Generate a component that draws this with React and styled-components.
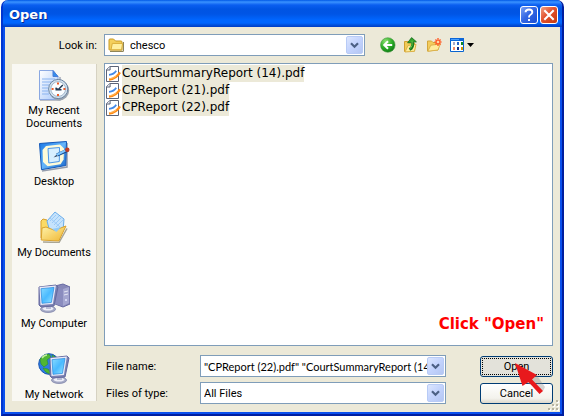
import React from "react";
import styled, { createGlobalStyle, css } from "styled-components";

const Global = createGlobalStyle`
  *, *::before, *::after { box-sizing: border-box; }
  body { margin: 0; background: #fff; }
  button, input, select { font: inherit; color: inherit; margin: 0; }
`;

const edge = "#7f9db9";

const Dialog = styled.main`
  position: relative;
  display: flex;
  flex-direction: column;
  height: 100vh;
  min-height: 400px;
  margin-left: 1px;
  padding: 0 2px 2px;
  background: #ece9d8;
  border: 2px solid #001ea0;
  border-top: 0;
  border-left-color: #0036d0;
  border-radius: 7px 7px 0 0;
  box-shadow: inset 2px -2px 0 #0a50ee, inset -2px 0 0 #0a50ee;
  font: 11px/13px Roboto, "Liberation Sans", Arial, sans-serif;
  color: #000;
  overflow: hidden;
`;

const TitleBar = styled.header`
  display: flex;
  align-items: center;
  gap: 2px;
  flex: none;
  height: 27px;
  margin: 0 -2px;
  padding: 3px 4px 0 6px;
  background: linear-gradient(#0058e6 0, #3a93ff 2px, #2a80fa 3px, #0a5ef0 5px, #0054e3 9px, #0055e5 14px, #0066ff 20px, #0066ff 23px, #0050dc 25px, #003cc4 27px);
`;

const Title = styled.h1`
  flex: 1;
  margin: 0;
  font: bold 13px/20px "DejaVu Sans", Verdana, sans-serif;
  color: #fff;
  text-shadow: 1px 1px 0 #0a2a90;
`;

const CaptionButton = styled.button`
  display: grid;
  place-items: center;
  width: 18px;
  height: 18px;
  padding: 0;
  border: 1px solid #fff;
  border-radius: 3px;
  background: ${(p) =>
    p.$danger
      ? "linear-gradient(135deg, #f0a083, #e2512c 45%, #c43a10)"
      : "linear-gradient(135deg, #7ba2f4, #3568e4 45%, #1a4ed4)"};
`;

const Body = styled.div`
  flex: 1;
  min-height: 0;
  display: grid;
  grid-template-columns: 85px minmax(0, 1fr);
  grid-template-rows: 22px minmax(0, 1fr);
  gap: 7px;
  padding: 7px 7px 8px;
`;

const Label = styled.label`
  align-self: center;
  text-align: ${(p) => (p.$end ? "right" : "left")};
  padding-left: 2px;
`;

const LookRow = styled.div`
  display: flex;
  gap: 15px;
`;

const Combo = styled.div`
  flex: 1;
  min-width: 0;
  display: flex;
  align-items: center;
  height: 22px;
  padding: 1px 1px 1px 3px;
  border: 1px solid ${edge};
  background: #fff;
`;

const fieldText = css`
  flex: 1;
  min-width: 0;
  height: 18px;
  padding: 0;
  border: 0;
  outline: 0;
  background: transparent;
`;

const Select = styled.select`
  ${fieldText}
  appearance: none;
  padding-left: ${(p) => (p.$afterIcon ? "6px" : "0")};
`;

const TextField = styled.input`
  ${fieldText}
  font-family: Lato, "Liberation Sans", sans-serif;
`;

const DropButton = styled.button`
  display: grid;
  place-items: center;
  flex: none;
  width: 17px;
  height: 18px;
  padding: 0;
  border: 1px solid #b8cbf6;
  border-radius: 2px;
  background: linear-gradient(135deg, #dce6fe, #c3d3fd 50%, #b4c6f2);
`;

const Toolbar = styled.div`
  display: flex;
  align-items: center;
  gap: 7px;
  flex: none;
  width: 173px;
`;

const ToolButton = styled.button`
  display: flex;
  align-items: center;
  gap: 2px;
  padding: 0;
  border: 0;
  background: none;
`;

const Places = styled.nav`
  display: grid;
  grid-auto-rows: 71px;
  align-content: start;
  min-height: 0;
  margin: 1px 0 3px;
  overflow: hidden;
  background: #f9f8f3;
  border-right: 1px solid #d6d2c2;
`;

const Place = styled.button`
  display: flex;
  flex-direction: column;
  align-items: center;
  justify-content: flex-start;
  gap: 3px;
  padding: 5px 0 0;
  border: 0;
  background: none;
  line-height: 13px;
  white-space: pre-line;
`;

const Main = styled.div`
  display: flex;
  flex-direction: column;
  gap: 9px;
  min-height: 0;
`;

const FilePane = styled.section`
  position: relative;
  flex: 1;
  min-height: 0;
  border: 1px solid ${edge};
  background: #fff;
`;

const FileList = styled.ul`
  list-style: none;
  margin: 0;
  padding: 1px;
`;

const FileRow = styled.button`
  display: flex;
  align-items: center;
  gap: 1px;
  height: 17px;
  padding: 0;
  border: 0;
  background: none;
  font: 12px/17px "DejaVu Sans", Verdana, sans-serif;
`;

const FileName = styled.span`
  background: #ece9d8;
`;

const Hint = styled.strong`
  position: absolute;
  right: 8px;
  bottom: 11px;
  font: bold 15px/20px "DejaVu Sans", Verdana, sans-serif;
  color: #f00;
`;

const Form = styled.form`
  display: grid;
  grid-template-columns: 96px minmax(0, 1fr) 73px;
  grid-template-rows: 22px 22px;
  row-gap: 5px;
  flex: none;
`;

const FormCombo = styled(Combo)`
  margin-right: 34px;
`;

const PushButton = styled.button`
  position: relative;
  height: 21px;
  align-self: center;
  padding: 0;
  border: 1px solid #003c74;
  border-radius: 3px;
  background: ${(p) => (p.$pressed ? "#e3e2da" : "linear-gradient(#fff, #f3f2ec 75%, #dcd8cc)")};
  outline: ${(p) => (p.$pressed ? "1px dotted #000" : "0")};
  outline-offset: -3px;
`;

const Pointer = styled.svg`
  position: absolute;
  left: 33px;
  top: 4px;
  z-index: 1;
  pointer-events: none;
`;

const Grip = styled.svg`
  position: absolute;
  right: 2px;
  bottom: 2px;
`;

const Chevron = () => (
  <svg width="9" height="7" viewBox="0 0 9 7" aria-hidden="true">
    <path d="M1 1.2 4.5 4.7 8 1.2" fill="none" stroke="#4d6185" strokeWidth="2.2" />
  </svg>
);

const FolderIcon = () => (
  <svg width="16" height="14" viewBox="0 0 16 14" aria-hidden="true">
    <path d="M2 13.4h12.5q1 0 1-1V4" fill="none" stroke="#8f8558" strokeWidth="1.1" />
    <path d="M1 11.5V2q0-1 1-1h3.5l2 2H13q1 0 1 1v8H2q-1 0-1-.5z" fill="#f4d05c" stroke="#c89a24" />
    <path d="M3 11.8 4.3 5.4h10.3l-1 6.4z" fill="#fff0a0" stroke="#d9ae3a" />
  </svg>
);

const PdfIcon = () => (
  <svg width="15" height="16" viewBox="0 0 15 16" aria-hidden="true">
    <path d="M.5 3.5 4 .5h8.5v15H.5z" fill="#fff" stroke="#5c6478" />
    <path d="M.5 4h3.6V.5" fill="#e9eff8" stroke="#5c6478" />
    <path d="M3 8.8q5-.3 7.2-4" fill="none" stroke="#4289e8" strokeWidth="1.8" />
    <path d="M3 13.5q7-.6 11-7.2" fill="none" stroke="#ff8a12" strokeWidth="2.3" />
    <path d="M3 12.8q5-.4 7.5-3" fill="none" stroke="#ffc878" strokeWidth=".8" />
  </svg>
);

const BackIcon = () => (
  <svg width="16" height="16" viewBox="0 0 16 16">
    <defs>
      <radialGradient id="green" cx=".35" cy=".25" r=".8">
        <stop offset="0" stopColor="#8be070" />
        <stop offset=".55" stopColor="#2fae2a" />
        <stop offset="1" stopColor="#0b7a12" />
      </radialGradient>
    </defs>
    <circle cx="7.8" cy="8" r="7.3" fill="url(#green)" stroke="#4e9a48" strokeWidth=".6" />
    <path d="M12.2 8H4.5M8 4.2 4.2 8 8 11.8" fill="none" stroke="#fff" strokeWidth="2" />
  </svg>
);

const UpIcon = () => (
  <svg width="16" height="16" viewBox="0 0 16 16">
    <path d="M1.5 14.5V4.5h4l1 1.5h5v8z" fill="#f2cb58" stroke="#d0a030" />
    <path d="m2 15 3-6.5 8-1.2-1.5 7z" fill="#ffec9c" stroke="#dcb248" />
    <path d="M6.5 12.5q4-2 3-7" fill="none" stroke="#177a1c" strokeWidth="3" />
    <path d="M4.6 5.8 8.6.6l4.8 4.2-2.1.3-4 .6z" fill="#32a22c" stroke="#146c1a" strokeWidth=".8" />
    <path d="M7.3 11.6q2.5-2 1.8-8" fill="none" stroke="#66c84c" />
  </svg>
);

const NewFolderIcon = () => (
  <svg width="16" height="16" viewBox="0 0 16 16">
    <path d="M1.5 14V4h4L7 5.5h5V13z" fill="#f3cc5c" stroke="#d3a63a" />
    <path d="M1.8 14.3 4.8 8.2l9.5-1.2L12 13z" fill="#ffec9c" stroke="#dbb24c" />
    <path d="M12 1v8M8.5 5h7M9.4 2.4l5.2 5.2M14.6 2.4 9.4 7.6" stroke="#ff5c28" strokeWidth="1.4" />
    <circle cx="12" cy="5" r="1.3" fill="#ffd8a0" />
  </svg>
);

const ViewsIcon = () => (
  <svg width="16" height="16" viewBox="0 0 16 16">
    <path d="M1.5 2.5h13v12h-13z" fill="#fff" stroke="#0864d0" />
    <path d="M1 1h14v3H1z" fill="#0c66d8" />
    <path d="M2 2h8v1H2z" fill="#4ba0ff" />
    <path d="M4 5h2v3H4z" fill="#a8a8c8" />
    <path d="M8 5h2v3H8z" fill="#2864c8" />
    <path d="M12 5h2v3h-2z" fill="#118a20" />
    <path d="M4 10h2v3H4z" fill="#f08868" />
    <path d="M8 10h2v3H8z" fill="#102c88" />
    <path d="M12 10h2v3h-2z" fill="#d89800" />
  </svg>
);

const Caret = () => (
  <svg width="7" height="4" viewBox="0 0 7 4">
    <path d="M0 0h7L3.5 4z" />
  </svg>
);

const RecentIcon = () => (
  <svg width="32" height="32" viewBox="0 0 32 32" aria-hidden="true">
    <defs>
      <linearGradient id="sheet" x2="1" y2="1">
        <stop stopColor="#fff" />
        <stop offset="1" stopColor="#a8c8fa" />
      </linearGradient>
    </defs>
    <path d="M2 31h20V8" fill="none" stroke="#a5aab8" strokeWidth="1.5" />
    <path d="M1.5 1.5H15l5 6v23H1.5z" fill="url(#sheet)" stroke="#8aa8e2" />
    <path d="M15 1.5v6h5z" fill="#328eed" stroke="#4b7dd8" />
    <path d="M4 10h13M4 13h10M4 16h7M4 19h6M4 22h6M4 25h7" stroke="#8ab4f0" strokeWidth="1.2" />
    <circle cx="21.2" cy="21.5" r="10" fill="#9ca5b0" />
    <circle cx="20.2" cy="20" r="9.6" fill="#d4e2ee" stroke="#6c86a2" />
    <circle cx="20.2" cy="20" r="7.4" fill="#fafdff" stroke="#90a8c0" strokeWidth=".8" />
    <path d="M20 13.6v2M20 25v2M13.6 20h2M25.4 20h2" stroke="#ee5c28" strokeWidth="2" />
    <path d="m24.8 16-4.5 4.6-2.8-1.6M17.5 20.8h6" fill="none" stroke="#253c55" strokeWidth="1.5" />
  </svg>
);

const DesktopIcon = () => (
  <svg width="32" height="32" viewBox="0 0 32 32" aria-hidden="true">
    <defs>
      <linearGradient id="desk" x2="1" y2="1">
        <stop stopColor="#1675e5" />
        <stop offset=".5" stopColor="#67b6fa" />
        <stop offset="1" stopColor="#1262c8" />
      </linearGradient>
    </defs>
    <path d="m4 31 25-4V3" fill="none" stroke="#939cac" strokeWidth="1.5" />
    <path d="m1.5 3.5 27-2-.7 24L3.5 29.7z" fill="url(#desk)" stroke="#1459b8" />
    <path d="m8 6 14-1.5 4 4-.4 11-3 4.8-13 2L5 22 4.5 10z" fill="#fffbd8" />
    <path d="m10 8.5 11.5-1-.2 14L10.8 23z" fill="#d7efff" stroke="#4d96e6" />
    <path d="m19 15 11-5" stroke="#174888" strokeWidth="3.5" />
    <path d="m18.5 15 9-4.5" stroke="#7dc5ff" strokeWidth="2" />
    <path d="m15.5 17.5 3-2.8.8 1.6z" fill="#273a58" />
    <circle cx="29.3" cy="9.8" r="2.2" fill="#c23d22" />
  </svg>
);

const DocumentsIcon = () => (
  <svg width="32" height="32" viewBox="0 0 32 32" aria-hidden="true">
    <defs>
      <linearGradient id="fold" x2="1" y2="1">
        <stop stopColor="#fff4ac" />
        <stop offset="1" stopColor="#efb52f" />
      </linearGradient>
    </defs>
    <path d="m5 31 16 .5 8-14" fill="none" stroke="#a9a594" strokeWidth="1.5" />
    <path d="M3 27V10l2-2 4 1 3 5 15 2-8 13z" fill="#fada66" stroke="#d79f2b" />
    <path d="m9 10 8-9 9 7-1 12-13 1z" fill="#c5e3fc" stroke="#6badea" />
    <path d="m12 10 6-6M14 12l7-7M16 14l7-7M18 16l7-7M12 7l10 9" stroke="#9ccaf6" />
    <path d="m3.2 29 .8-12 4-1 8.5 3.3L28 15l-7.2 15z" fill="url(#fold)" stroke="#d9a22e" />
    <path d="m14 18 9-2-4.5 5z" fill="#91cbf6" />
  </svg>
);

const Screen = ({ x = 0, y = 0 }) => (
  <g transform={`translate(${x} ${y})`}>
    <ellipse cx="10" cy="25.2" rx="7.5" ry="3.2" fill="#a5aac6" stroke="#8c90b2" />
    <ellipse cx="10" cy="24.6" rx="5.5" ry="2" fill="#eeeef8" />
    <path d="m8 20 5-1v6H8z" fill="#b9bdd5" />
    <path d="m1 3 17-2 2 2-4 19-13 1-2-2z" fill="#7a80b0" stroke="#6469a0" />
    <path d="m1.5 3 16.4-1.6-3 18.6L2.5 21z" fill="#e8eaf8" />
    <path d="m3 4.7 13-1.3-2.6 15L4 19.3z" fill="url(#glass)" stroke="#2287dc" strokeWidth=".7" />
  </g>
);

const GlassGradient = () => (
  <linearGradient id="glass" x2="1" y2="1">
    <stop stopColor="#8adcff" />
    <stop offset=".5" stopColor="#4abaff" />
    <stop offset="1" stopColor="#9ae6ff" />
  </linearGradient>
);

const ComputerIcon = () => (
  <svg width="32" height="32" viewBox="0 0 32 32" aria-hidden="true">
    <defs><GlassGradient /></defs>
    <path d="m17 4 8-2 7 3v17l-7 3-8-3z" fill="#8788b8" stroke="#676aa2" />
    <path d="m25 7 6-2v16l-6 3z" fill="#a4a6d0" />
    <path d="m17 4 8 3v17l-8-2z" fill="#8a8cbe" />
    <path d="m26 10 4-1M26 13l4-1" stroke="#e5e6f5" />
    <circle cx="28" cy="18" r="1" fill="#e4e5ff" />
    <Screen y={2} />
  </svg>
);

const NetworkIcon = () => (
  <svg width="32" height="32" viewBox="0 0 32 32" aria-hidden="true">
    <circle cx="11" cy="11" r="10.3" fill="#2e7de6" stroke="#1a57b2" />
    <path d="M2 6q4-5 9-5l2 3-4 3 1 4-4 3-3-3zM5 15l5 1 3 4-1 1q-5-1-7-6zM14 2l5 3 1 4-5-3z" fill="#50b634" stroke="#2b8627" strokeWidth=".5" />
    <path d="M4 5q2-3 5-3" fill="none" stroke="#c3f09a" strokeWidth="1.5" />
    <Screen x={11} y={2} />
  </svg>
);

const places = [
  ["My Recent\nDocuments", RecentIcon],
  ["Desktop", DesktopIcon],
  ["My Documents", DocumentsIcon],
  ["My Computer", ComputerIcon],
  ["My Network", NetworkIcon],
];

const files = ["CourtSummaryReport (14).pdf", "CPReport (21).pdf", "CPReport (22).pdf"];

export default function App() {
  return (
    <>
      <Global />
      <Dialog>
        <TitleBar>
          <Title>Open</Title>
          <CaptionButton aria-label="Help">
            <svg width="12" height="14" viewBox="0 0 12 14">
              <path d="M2.5 4.2Q2.7 1.5 6 1.5t3.3 2.8Q9.3 6 7.2 7 6 7.6 6 9.4M6 11v2" fill="none" stroke="#fff" strokeWidth="1.9" />
            </svg>
          </CaptionButton>
          <CaptionButton $danger aria-label="Close">
            <svg width="12" height="12" viewBox="0 0 12 12">
              <path d="m1.3 1.3 9.4 9.4m0-9.4-9.4 9.4" stroke="#fff" strokeWidth="2.1" />
            </svg>
          </CaptionButton>
        </TitleBar>
        <Body>
          <Label $end htmlFor="look">Look in:</Label>
          <LookRow>
            <Combo>
              <FolderIcon />
              <Select id="look" $afterIcon>
                <option>chesco</option>
              </Select>
              <DropButton type="button" aria-label="Show folders"><Chevron /></DropButton>
            </Combo>
            <Toolbar>
              <ToolButton aria-label="Back"><BackIcon /></ToolButton>
              <ToolButton aria-label="Up one level"><UpIcon /></ToolButton>
              <ToolButton aria-label="New folder"><NewFolderIcon /></ToolButton>
              <ToolButton aria-label="Views"><ViewsIcon /><Caret /></ToolButton>
            </Toolbar>
          </LookRow>
          <Places>
            {places.map(([name, Icon]) => (
              <Place key={name}><Icon />{name}</Place>
            ))}
          </Places>
          <Main>
            <FilePane>
              <FileList>
                {files.map((name) => (
                  <li key={name}>
                    <FileRow><PdfIcon /><FileName>{name}</FileName></FileRow>
                  </li>
                ))}
              </FileList>
              <Hint>Click "Open"</Hint>
            </FilePane>
            <Form onSubmit={(e) => e.preventDefault()}>
              <Label htmlFor="name">File name:</Label>
              <FormCombo>
                <TextField id="name" defaultValue={'"CPReport (22).pdf" "CourtSummaryReport (14'} />
                <DropButton type="button" aria-label="Show names"><Chevron /></DropButton>
              </FormCombo>
              <PushButton $pressed>
                Open
                <Pointer width="34" height="36" viewBox="0 0 34 36" aria-hidden="true">
                  <path d="m13 22 9-9 9 13-2 4z" fill="#888" opacity=".35" />
                  <path d="m1 2 22 12-5 4.5 11 11.5-3.5 3L14.5 21l-6 4z" fill="#e8191c" />
                </Pointer>
              </PushButton>
              <Label htmlFor="type">Files of type:</Label>
              <FormCombo>
                <Select id="type">
                  <option>All Files</option>
                </Select>
                <DropButton type="button" aria-label="Show types"><Chevron /></DropButton>
              </FormCombo>
              <PushButton type="button">Cancel</PushButton>
            </Form>
          </Main>
        </Body>
        <Grip width="12" height="12" viewBox="0 0 12 12" aria-hidden="true">
          <path d="M9 1h2v2H9zM9 5h2v2H9zM9 9h2v2H9zM5 5h2v2H5zM5 9h2v2H5zM1 9h2v2H1z" fill="#fff" />
          <path d="M8 0h2v2H8zM8 4h2v2H8zM8 8h2v2H8zM4 4h2v2H4zM4 8h2v2H4zM0 8h2v2H0z" fill="#b8b4a2" />
        </Grip>
      </Dialog>
    </>
  );
}
